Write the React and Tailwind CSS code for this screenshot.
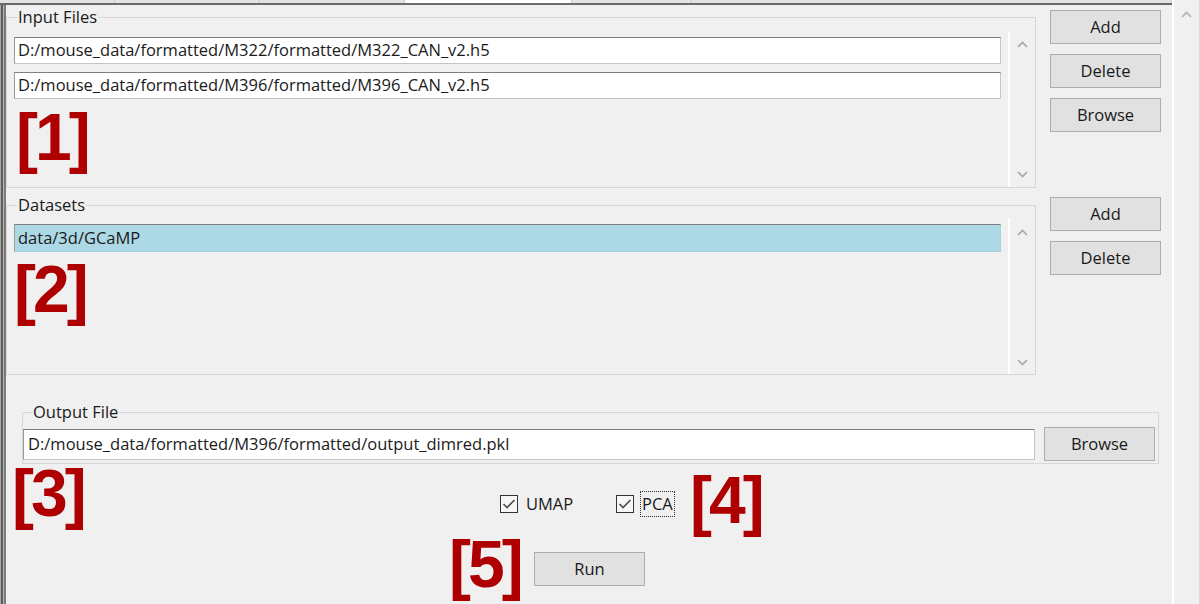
import React from 'react';

const Chevron = ({ down = false, color = '#a6a6a6' }) => (
  <svg width="11" height="7" viewBox="0 0 11 7" className="block">
    <polyline
      points={down ? '1,1 5.5,5.5 10,1' : '1,6 5.5,1.5 10,6'}
      fill="none"
      stroke={color}
      strokeWidth="1.6"
    />
  </svg>
);

const WinButton = ({ children, className = '' }) => (
  <div
    className={`flex items-center justify-center border border-[#adadad] bg-[#e1e1e1] ${className}`}
  >
    {children}
  </div>
);

const Edit = ({ children, className = '' }) => (
  <div
    className={`flex items-center border border-[#c4c4c4] border-t-[#7f7f7f] border-l-[#9a9a9a] pl-[3px] whitespace-nowrap ${className}`}
  >
    {children}
  </div>
);

// Qt style group box: label sits on the top border line
const GroupBox = ({ label, labelClass = 'ml-[10px]', className = '', children }) => (
  <div className={`flex flex-col border border-[#d7d7d7] ${className}`}>
    <div className={`-mt-[11px] h-[20px] w-fit bg-[#f0f0f0] px-px leading-[20px] ${labelClass}`}>
      {label}
    </div>
    {children}
  </div>
);

const ListScroll = ({ className = '' }) => (
  <div className={`flex w-[27px] flex-col items-center justify-between border-l-2 border-white ${className}`}>
    <Chevron />
    <Chevron down />
  </div>
);

const CheckBox = () => (
  <div className="flex h-[18px] w-[18px] items-center justify-center border border-[#333333] bg-[#f7f7f7]">
    <svg width="14" height="12" viewBox="0 0 14 12">
      <polyline points="1.5,6 5,9.5 12.5,2" fill="none" stroke="#505050" strokeWidth="1.7" />
    </svg>
  </div>
);

const Mark = ({ text, className }) => (
  <span
    className={`absolute font-['Liberation_Sans',Arial,sans-serif] text-[66px] font-bold leading-none tracking-[-3px] text-[#ae0000] ${className}`}
  >
    {text}
  </span>
);

export default function App() {
  const tabs = [115, 145, 145, 167, 120, 480];

  return (
    <div className="relative flex h-[604px] w-[1200px] overflow-hidden bg-[#f0f0f0] font-['Open_Sans',sans-serif] text-[16.5px] text-[#1a1a1a]">
      <div className="flex w-[1172px] flex-col">
        {/* remnant of the tab strip above */}
        <div className="flex h-[3px]">
          {tabs.map((w, i) => (
            <div
              key={i}
              style={{ width: w }}
              className={`h-full border-r border-[#c9c9c9] ${i === 3 ? 'bg-white' : 'bg-[#e4e4e4]'}`}
            />
          ))}
        </div>
        <div className="h-[2px] bg-[#6a6a6a]" />

        <div className="flex flex-1">
          {/* window edge */}
          <div className="flex w-[6px]">
            <div className="w-px bg-[#a9a9a9]" />
            <div className="w-[2px] bg-[#5f5f5f]" />
            <div className="w-px bg-[#b5b5b5]" />
            <div className="w-[2px] bg-[#7b7b7b]" />
          </div>

          <div className="flex w-[1166px] flex-col">
            {/* Input Files */}
            <div className="flex items-start">
              <GroupBox label="Input Files" className="mt-[12px] h-[171px] w-[1030px]">
                <div className="flex flex-1">
                  <div className="flex flex-col gap-[8px] pt-[10px] pl-[7px]">
                    <Edit className="h-[27px] w-[987px] bg-white">
                      D:/mouse_data/formatted/M322/formatted/M322_CAN_v2.h5
                    </Edit>
                    <Edit className="h-[27px] w-[987px] bg-white">
                      D:/mouse_data/formatted/M396/formatted/M396_CAN_v2.h5
                    </Edit>
                  </div>
                  <ListScroll className="mt-[5px] ml-[7px] pt-[9px] pb-[9px]" />
                </div>
              </GroupBox>
              <div className="mt-[5px] ml-[14px] flex flex-col gap-[10px]">
                <WinButton className="h-[34px] w-[111px]">Add</WinButton>
                <WinButton className="h-[34px] w-[111px]">Delete</WinButton>
                <WinButton className="h-[34px] w-[111px]">Browse</WinButton>
              </div>
            </div>

            {/* Datasets */}
            <div className="mt-[9px] flex items-start">
              <GroupBox label="Datasets" className="mt-[8px] h-[170px] w-[1030px]">
                <div className="flex flex-1">
                  <div className="flex flex-col pt-[9px] pl-[7px]">
                    <Edit className="h-[28px] w-[987px] border-r-[#a9d2e0] border-b-[#a9d2e0] bg-[#add8e6]">
                      data/3d/GCaMP
                    </Edit>
                  </div>
                  <ListScroll className="mt-[3px] ml-[7px] pt-[11px] pb-[8px]" />
                </div>
              </GroupBox>
              <div className="ml-[14px] flex flex-col gap-[10px]">
                <WinButton className="h-[34px] w-[111px]">Add</WinButton>
                <WinButton className="h-[34px] w-[111px]">Delete</WinButton>
              </div>
            </div>

            {/* Output File */}
            <GroupBox
              label="Output File"
              labelClass="ml-[9px]"
              className="mt-[37px] ml-[16px] h-[52px] w-[1137px]"
            >
              <div className="mt-[5px] flex h-[34px] items-center">
                <Edit className="h-[31px] w-[1012px] border-[#7a7a7a] bg-white pl-[4px]">
                  D:/mouse_data/formatted/M396/formatted/output_dimred.pkl
                </Edit>
                <WinButton className="ml-[9px] h-[34px] w-[111px]">Browse</WinButton>
              </div>
            </GroupBox>

            {/* options */}
            <div className="mt-[27px] ml-[494px] flex h-[26px] items-center">
              <div className="flex w-[116px] items-center">
                <CheckBox />
                <span className="ml-[8px]">UMAP</span>
              </div>
              <CheckBox />
              <span className="ml-[6px] flex h-[26px] items-center border border-dotted border-[#333333] px-px">
                PCA
              </span>
            </div>

            <WinButton className="mt-[35px] ml-[528px] h-[34px] w-[111px]">Run</WinButton>
          </div>
        </div>
      </div>

      {/* outer scroll bar */}
      <div className="flex w-[28px] flex-col items-center border-r border-l-2 border-r-[#dadada] border-l-white pt-[11px]">
        <Chevron color="#b0b0b0" />
      </div>

      <Mark text="[1]" className="top-[104px] left-[16px]" />
      <Mark text="[2]" className="top-[256px] left-[14px]" />
      <Mark text="[3]" className="top-[460px] left-[12px]" />
      <Mark text="[4]" className="top-[467px] left-[690px]" />
      <Mark text="[5]" className="top-[531px] left-[449px]" />
    </div>
  );
}
